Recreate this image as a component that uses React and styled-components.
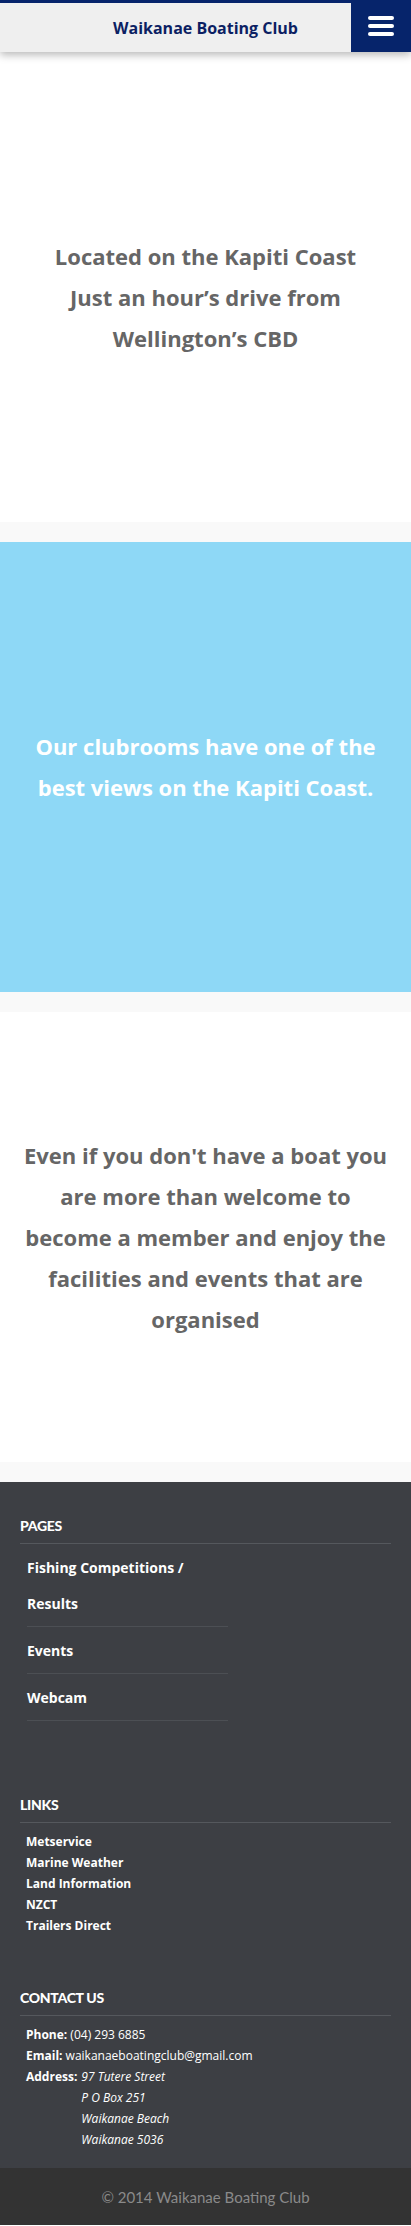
import React from "react";
import styled, { createGlobalStyle } from "styled-components";

const pages = [
  "Fishing Competitions / Results",
  "Events",
  "Webcam",
];

const links = [
  "Metservice",
  "Marine Weather",
  "Land Information",
  "NZCT",
  "Trailers Direct",
];

const address = [
  "97 Tutere Street",
  "P O Box 251",
  "Waikanae Beach",
  "Waikanae 5036",
];

function App() {
  return (
    <Page>
      <GlobalStyle />
      <Header>
        <Title>Waikanae Boating Club</Title>
        <MenuButton aria-label="Menu">
          <Bar />
          <Bar />
          <Bar />
        </MenuButton>
      </Header>

      <Panel $top={20}>
        <Lead>
          Located on the Kapiti Coast
          <br />
          Just an hour’s drive from
          <br />
          Wellington’s CBD
        </Lead>
      </Panel>

      <Band />

      <Panel $bg="#8ed8f6">
        <Lead $color="#ffffff">
          Our clubrooms have one of the best views on the Kapiti Coast.
        </Lead>
      </Panel>

      <Band />

      <Panel>
        <Lead>
          Even if you don't have a boat you are more than welcome to become a
          member and enjoy the facilities and events that are organised
        </Lead>
      </Panel>

      <Band />

      <Footer>
        <FooterColumn $space={74}>
          <FooterHeading>Pages</FooterHeading>
          <PageList>
            {pages.map((p) => (
              <PageItem key={p}>{p}</PageItem>
            ))}
          </PageList>
        </FooterColumn>

        <FooterColumn $space={52}>
          <FooterHeading>Links</FooterHeading>
          <LinkList>
            {links.map((l) => (
              <LinkItem key={l}>{l}</LinkItem>
            ))}
          </LinkList>
        </FooterColumn>

        <FooterColumn $space={0}>
          <FooterHeading>Contact Us</FooterHeading>
          <ContactList>
            <ContactRow>
              <Label>Phone:</Label> (04) 293 6885
            </ContactRow>
            <ContactRow>
              <Label>Email:</Label> waikanaeboatingclub@gmail.com
            </ContactRow>
            <AddressRow>
              <Label>Address:</Label>
              <AddressLines>
                {address.map((a) => (
                  <span key={a}>{a}</span>
                ))}
              </AddressLines>
            </AddressRow>
          </ContactList>
        </FooterColumn>
      </Footer>

      <BottomBar>© 2014 Waikanae Boating Club</BottomBar>
    </Page>
  );
}

export default App;

const GlobalStyle = createGlobalStyle`
  body {
    margin: 0;
    background: #ffffff;
    font-family: "Open Sans", "Liberation Sans", sans-serif;
  }
`;

const Page = styled.div`
  width: 411px;
  display: flex;
  flex-direction: column;
`;

const Header = styled.header`
  height: 49px;
  display: flex;
  background: #efefef;
  border-top: 3px solid #06246b;
  box-shadow: 0 3px 8px rgba(0, 0, 0, 0.28);
  position: relative;
  z-index: 2;
`;

const Title = styled.div`
  flex: 1;
  padding-left: 60px;
  display: flex;
  align-items: center;
  justify-content: center;
  font-size: 16px;
  font-weight: 700;
  color: #0c1f63;
`;

const MenuButton = styled.div`
  width: 60px;
  margin-top: -3px;
  background: #06246b;
  display: flex;
  flex-direction: column;
  align-items: center;
  justify-content: center;
  gap: 4px;
`;

const Bar = styled.span`
  display: block;
  width: 26px;
  height: 4px;
  border-radius: 2px;
  background: #ffffff;
`;

const Panel = styled.section`
  height: 450px;
  padding: ${(p) => p.$top || 0}px 20px 0;
  background: ${(p) => p.$bg || "#ffffff"};
  display: flex;
  align-items: center;
  justify-content: center;
`;

const Lead = styled.p`
  margin: 0;
  text-align: center;
  font-size: 22px;
  font-weight: 700;
  line-height: 41px;
  color: ${(p) => p.$color || "#666666"};
`;

const Band = styled.div`
  height: 20px;
  background: #f9f9f9;
`;

const Footer = styled.footer`
  background: #3d3f44;
  padding: 34px 20px 18px;
  color: #ffffff;
`;

const FooterColumn = styled.div`
  margin-bottom: ${(p) => p.$space}px;
`;

const FooterHeading = styled.h3`
  margin: 0;
  padding-bottom: 7px;
  border-bottom: 1px solid #55585d;
  font-family: "Lato", "Liberation Sans", sans-serif;
  font-size: 14px;
  font-weight: 900;
  line-height: 20px;
  letter-spacing: -0.3px;
  text-transform: uppercase;
`;

const PageList = styled.ul`
  list-style: none;
  margin: 0 0 0 7px;
  padding: 0;
  width: 201px;
`;

const PageItem = styled.li`
  padding: 6px 0 4px;
  border-bottom: 1px solid #4c4f54;
  font-size: 14px;
  font-weight: 700;
  line-height: 36px;
`;

const LinkList = styled.ul`
  list-style: none;
  margin: 0 0 0 6px;
  padding: 8px 0 0;
`;

const LinkItem = styled.li`
  font-size: 12px;
  font-weight: 700;
  line-height: 21px;
`;

const ContactList = styled.div`
  margin-left: 6px;
  padding-top: 8px;
  font-size: 12px;
  line-height: 21px;
`;

const ContactRow = styled.div``;

const Label = styled.b`
  font-weight: 700;
`;

const AddressRow = styled.div`
  display: flex;
  gap: 4px;
`;

const AddressLines = styled.div`
  display: flex;
  flex-direction: column;
  font-style: italic;
`;

const BottomBar = styled.div`
  height: 57px;
  background: #333333;
  display: flex;
  align-items: center;
  justify-content: center;
  font-family: "Lato", "Liberation Sans", sans-serif;
  font-size: 15px;
  color: #8a8a8a;
`;
